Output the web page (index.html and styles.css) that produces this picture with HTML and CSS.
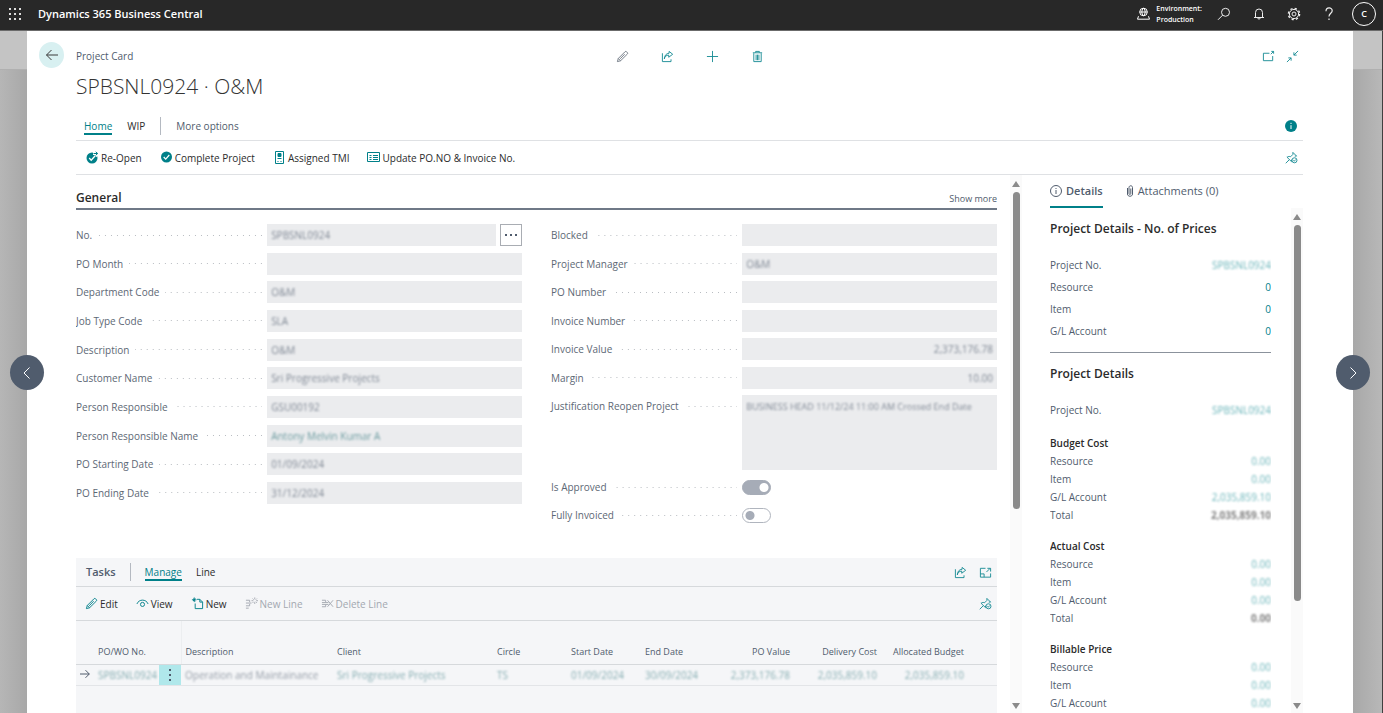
FILE: index.html
```html
<!DOCTYPE html>
<html lang="en">
<head>
<meta charset="utf-8">
<title>Project Card - Dynamics 365 Business Central</title>
<link rel="stylesheet" href="styles.css">
</head>
<body>
<svg class="defs" aria-hidden="true">
  <symbol id="i-pencil" viewBox="0 0 14 14"><path d="M1.500 12.500l1-3.400L9.600 2a1.300 1.300 0 0 1 1.900 0l.6.6a1.300 1.300 0 0 1 0 1.900L4.900 11.600zM2.500 9.100l2.400 2.500M9.300 4.500L4.500 9.500"/></symbol>
  <symbol id="i-share" viewBox="0 0 14 14"><path d="M1.500 3.500v9h9.300V10M3.600 9.600c.4-2.600 2-4 4.700-4.100V7.800L12.600 4.600 8.700 1.500v2C5.500 3.700 3.700 6 3.600 9.600z"/></symbol>
  <symbol id="i-plus" viewBox="0 0 14 14"><path d="M7 1v12M1 7h12"/></symbol>
  <symbol id="i-trash" viewBox="0 0 14 14"><path d="M2 3h10M5 2.800V1.500h4v1.300M3 3.500v9h8v-9M5.500 5v6M7 5v6M8.500 5v6"/></symbol>
  <symbol id="i-popout" viewBox="0 0 14 14"><path d="M8 3.500H1.500v8h10V6.500M9.500 4.500l3-3M10 1.500h2.500V4"/></symbol>
  <symbol id="i-shrink" viewBox="0 0 14 14"><path d="M13 1L8.500 5.500M8.500 2.500v3h3M1 13l4.500-4.500M2.500 8.500h3v3"/></symbol>
  <symbol id="i-pin" viewBox="0 0 14 14"><path d="M.8 13.200l3.700-3.700M2 6.500l5 5M2.300 6.700c1.300-1 2.700-1 3.700-.5l2.500-2.500V1.500l4 4h-2M7 11.300v-2"/><circle cx="10.200" cy="10" r="2.700"/><path d="M9 10l1 1 1.500-1.800"/></symbol>
  <symbol id="i-expand" viewBox="0 0 14 14"><path d="M7 2.500H1.500v9.500h11V8M1.500 8.500h4V12M8 6.500l4-4M9 2.500h3.500V6"/></symbol>
</svg>

<header class="topbar">
  <button class="icon-btn" aria-label="App launcher"><svg width="12" height="12" viewBox="0 0 12 12" fill="#ddd"><path d="M0 0h2v2H0zM5 0h2v2H5zM10 0h2v2h-2zM0 5h2v2H0zM5 5h2v2H5zM10 5h2v2h-2zM0 10h2v2H0zM5 10h2v2H5zM10 10h2v2h-2z"/></svg></button>
  <span class="brand">Dynamics 365 Business Central</span>
  <div class="env">
    <svg width="13" height="13" viewBox="0 0 13 13" class="line"><circle cx="6.500" cy="5" r="3.800"/><path d="M2.700 5h7.600M6.500 1.200c-2.200 2-2.200 5.500 0 7.600M6.500 1.200c2.200 2 2.200 5.500 0 7.600M1.500 9.200l-1 3h12l-1-3"/></svg>
    <span>Environment:<br>Production</span>
  </div>
  <nav class="top-actions">
    <button class="icon-btn" aria-label="Search"><svg width="14" height="14" viewBox="0 0 14 14" class="line"><circle cx="8.500" cy="5.300" r="4"/><path d="M5.600 8.200L1 12.800"/></svg></button>
    <button class="icon-btn" aria-label="Notifications"><svg width="14" height="14" viewBox="0 0 14 14" class="line"><path d="M2 10.500h10M3.500 10.500V5.500a3.500 3.500 0 0 1 7 0v5M5.800 11c.3 1.600 2.100 1.600 2.400 0"/></svg></button>
    <button class="icon-btn" aria-label="Settings"><svg width="14" height="14" viewBox="0 0 14 14" class="line"><circle cx="7" cy="7" r="4.600"/><circle cx="7" cy="7" r="2"/><circle cx="7" cy="7" r="5.600" stroke-dasharray="2.200 2.200" stroke-width="1.400"/></svg></button>
    <button class="icon-btn" aria-label="Help"><svg width="14" height="14" viewBox="0 0 14 14" class="line"><path d="M4 4.200c0-4.300 6.200-4.200 6.200-.5C10.200 6.300 7 6.300 7 9.500M7 11.500v1.500" stroke-width="1.200"/></svg></button>
    <button class="avatar" aria-label="Account">C</button>
  </nav>
</header>

<div class="stage">
  <button class="pager pager-prev" aria-label="Previous record"><svg width="14" height="14" viewBox="0 0 14 14" class="line"><path d="M9.500 1.500L4 7l5.500 5.500"/></svg></button>
  <button class="pager pager-next" aria-label="Next record"><svg width="14" height="14" viewBox="0 0 14 14" class="line"><path d="M4.500 1.500L10 7l-5.500 5.500"/></svg></button>

  <main class="page">
    <button class="back" aria-label="Back"><svg width="14" height="14" viewBox="0 0 14 14" class="line"><path d="M13 7H1.500M6.500 2l-5 5 5 5"/></svg></button>
    <div class="content">
      <div class="page-head">
        <span class="caption">Project Card</span>
        <div class="head-actions">
          <button class="icon-btn muted" aria-label="Edit"><svg class="ico"><use href="#i-pencil"/></svg></button>
          <button class="icon-btn" aria-label="Share"><svg class="ico"><use href="#i-share"/></svg></button>
          <button class="icon-btn" aria-label="New"><svg class="ico"><use href="#i-plus"/></svg></button>
          <button class="icon-btn" aria-label="Delete"><svg class="ico"><use href="#i-trash"/></svg></button>
        </div>
        <div class="head-window">
          <button class="icon-btn" aria-label="Open in new window"><svg class="ico"><use href="#i-popout"/></svg></button>
          <button class="icon-btn" aria-label="Collapse"><svg class="ico"><use href="#i-shrink"/></svg></button>
        </div>
      </div>
      <h1>SPBSNL0924 · O&amp;M</h1>

      <div class="bar tabs">
        <button class="tab active">Home</button>
        <button class="tab">WIP</button>
        <span class="divider"></span>
        <button class="tab soft">More options</button>
        <button class="icon-btn push" aria-label="Information"><svg width="12" height="12" viewBox="0 0 12 12"><circle cx="6" cy="6" r="6" fill="#008089"/><path d="M6 5.200v3.800M6 2.800v1.200" stroke="#fff"/></svg></button>
      </div>
      <div class="bar toolbar">
        <button class="action"><svg width="13" height="13" viewBox="0 0 13 13"><circle cx="6" cy="7" r="5.500" fill="#008089"/><path d="M3.200 7l2 2.200 4-4.500" stroke="#fff" stroke-width="1.300" fill="none"/><path d="M7 2.500h4.500M9.500.3l2.500 2.200-2.500 2.300" stroke="#fff" stroke-width="3" fill="none"/><path d="M7.500 2.500h4M9.700.8l2 1.700-2 1.800" stroke="#008089" fill="none"/></svg>Re-Open</button>
        <button class="action"><svg width="13" height="13" viewBox="0 0 13 13"><circle cx="6.500" cy="6" r="5.500" fill="#008089"/><path d="M3.700 6l2 2.200 3.600-4.200" stroke="#fff" stroke-width="1.200" fill="none"/></svg>Complete Project</button>
        <button class="action"><svg width="13" height="13" viewBox="0 0 13 13" class="line teal"><path d="M2.500.5h8v12h-8zM4.500 7.500h4M4.500 10.500h1M7.500 10.500h1"/><path d="M5 2.500h3v3H5z" fill="#008089"/></svg>Assigned TMI</button>
        <button class="action"><svg width="13" height="13" viewBox="0 0 13 13" class="line teal"><path d="M.5 1.500h12v9H.5zM2.500 4.500h2M2.500 6.500h2M2.500 8.500h2M6 4.500h5M6 6.500h5M6 8.500h5"/></svg>Update PO.NO &amp; Invoice No.</button>
        <button class="icon-btn push" aria-label="Pin actions"><svg class="ico"><use href="#i-pin"/></svg></button>
      </div>

      <div class="body">
        <div class="card">
          <section>
            <div class="group-head"><h2>General</h2><button class="link-btn">Show more</button></div>
            <div class="fields">
              <div class="stack stack-ten">
                <div class="field"><label for="no">No.</label><div class="with-more"><div class="box"><input id="no" readonly value="SPBSNL0924"></div><button class="more" aria-label="Look up number"><svg width="12" height="4" viewBox="0 0 12 4" fill="#505c6d"><path d="M0 1h2v2H0zM5 1h2v2H5zM10 1h2v2h-2z"/></svg></button></div></div>
                <div class="field"><label for="month">PO Month</label><div class="box"><input id="month" readonly></div></div>
                <div class="field"><label for="dept">Department Code</label><div class="box"><input id="dept" readonly value="O&amp;M"></div></div>
                <div class="field"><label for="job">Job Type Code</label><div class="box"><input id="job" readonly value="SLA"></div></div>
                <div class="field"><label for="desc">Description</label><div class="box"><input id="desc" readonly value="O&amp;M"></div></div>
                <div class="field"><label for="cust">Customer Name</label><div class="box"><input id="cust" readonly value="Sri Progressive Projects"></div></div>
                <div class="field"><label for="resp">Person Responsible</label><div class="box"><input id="resp" readonly value="GSU00192"></div></div>
                <div class="field"><label for="respname">Person Responsible Name</label><div class="box"><input id="respname" class="teal-text" readonly value="Antony Melvin Kumar A"></div></div>
                <div class="field"><label for="start">PO Starting Date</label><div class="box"><input id="start" readonly value="01/09/2024"></div></div>
                <div class="field"><label for="end">PO Ending Date</label><div class="box"><input id="end" readonly value="31/12/2024"></div></div>
              </div>
              <div class="side-stack">
                <div class="stack stack-six">
                  <div class="field"><label for="blocked">Blocked</label><div class="box"><input id="blocked" readonly></div></div>
                  <div class="field"><label for="pm">Project Manager</label><div class="box"><input id="pm" readonly value="O&amp;M"></div></div>
                  <div class="field"><label for="pon">PO Number</label><div class="box"><input id="pon" readonly></div></div>
                  <div class="field"><label for="inv">Invoice Number</label><div class="box"><input id="inv" readonly></div></div>
                  <div class="field"><label for="val">Invoice Value</label><div class="box"><input id="val" class="num" readonly value="2,373,176.78"></div></div>
                  <div class="field"><label for="margin">Margin</label><div class="box"><input id="margin" class="num" readonly value="10.00"></div></div>
                </div>
                <div class="field"><label for="just">Justification Reopen Project</label><div class="box"><textarea id="just" readonly>BUSINESS HEAD 11/12/24 11:00 AM Crossed End Date</textarea></div></div>
                <div class="field switch-row"><label for="appr">Is Approved</label><input id="appr" class="switch" type="checkbox" checked></div>
                <div class="field switch-row"><label for="full">Fully Invoiced</label><input id="full" class="switch" type="checkbox"></div>
              </div>
            </div>
          </section>

          <section class="tasks">
            <div class="bar task-tabs">
              <h2>Tasks</h2><span class="divider"></span>
              <button class="tab active">Manage</button>
              <button class="tab">Line</button>
              <button class="icon-btn push" aria-label="Share tasks"><svg class="ico"><use href="#i-share"/></svg></button>
              <button class="icon-btn" aria-label="Expand tasks"><svg class="ico"><use href="#i-expand"/></svg></button>
            </div>
            <div class="bar toolbar task-tools">
              <button class="action"><svg class="ico"><use href="#i-pencil"/></svg>Edit</button>
              <button class="action"><svg class="ico" viewBox="0 0 14 14"><path d="M1 7.500c2-5.500 10-5.500 12 0"/><circle cx="7" cy="8" r="2.200"/></svg>View</button>
              <button class="action"><svg class="ico" viewBox="0 0 14 14"><path d="M6.500 2.500H9.500l3 3v7H4.500V7M9.500 2.500v3h3M3.500.5v5M1 3h5M2.200 1.700l2.600 2.600M4.800 1.700L2.200 4.300"/></svg>New</button>
              <button class="action" disabled><svg class="ico" viewBox="0 0 14 14"><path d="M1 3.500h4v2M1 6.500h6M1 9.500h4v-2M1 12h3M10.500.5v2M10.500 5.500v2M7 4h2M12 4h2M8.200 1.700l1.200 1.200M11.600 5.100l1.200 1.200M12.800 1.700l-1.200 1.200M9.400 5.100L8.200 6.300"/></svg>New Line</button>
              <button class="action" disabled><svg class="ico" viewBox="0 0 14 14"><path d="M1 3.500h4v2M1 6h7M1 8h7M1 10.500h4v-2M7 3.500l6 7M13 3.500l-6 7"/></svg>Delete Line</button>
              <button class="icon-btn push" aria-label="Pin task actions"><svg class="ico"><use href="#i-pin"/></svg></button>
            </div>
            <table>
              <colgroup><col class="c-mark"><col class="c-no"><col class="c-menu"><col class="c-desc"><col class="c-client"><col class="c-date"><col class="c-date"><col class="c-date"><col class="c-val"><col class="c-cost"><col class="c-cost"><col></colgroup>
              <thead><tr><th></th><th class="flush">PO/WO No.</th><th class="edge"></th><th>Description</th><th>Client</th><th>Circle</th><th>Start Date</th><th>End Date</th><th class="num">PO Value</th><th class="num">Delivery Cost</th><th class="num">Allocated Budget</th><th></th></tr></thead>
              <tbody><tr>
                <td class="mark"><svg width="10" height="10" viewBox="0 0 10 10" class="line"><path d="M0 5h9.300M5.500 1.200L9.300 5 5.500 8.800"/></svg></td>
                <td class="flush teal-text"><span class="veil">SPBSNL0924</span></td>
                <td class="menu"><button class="icon-btn" aria-label="Row menu"><svg width="4" height="12" viewBox="0 0 4 12" fill="#505c6d"><path d="M1 0h2v2H1zM1 5h2v2H1zM1 10h2v2H1z"/></svg></button></td>
                <td><span class="veil">Operation and Maintainance</span></td>
                <td class="teal-text"><span class="veil">Sri Progressive Projects</span></td>
                <td class="teal-text"><span class="veil">TS</span></td>
                <td class="teal-text"><span class="veil">01/09/2024</span></td>
                <td class="teal-text"><span class="veil">30/09/2024</span></td>
                <td class="num teal-text"><span class="veil">2,373,176.78</span></td>
                <td class="num teal-text"><span class="veil">2,035,859.10</span></td>
                <td class="num teal-text"><span class="veil">2,035,859.10</span></td>
                <td></td>
              </tr></tbody>
            </table>
          </section>
        </div>

        <div class="scroll" aria-hidden="true"><span class="up"></span><span class="thumb thumb-main"></span><span class="down"></span></div>

        <aside class="facts">
          <div class="fact-tabs">
            <button class="fact-tab active"><svg width="12" height="12" viewBox="0 0 12 12" class="line"><circle cx="6" cy="6" r="5.500"/><path d="M6 5v4M6 3v1"/></svg>Details</button>
            <button class="fact-tab"><svg width="8" height="12" viewBox="0 0 8 12" class="line"><path d="M1.500 3v6c0 3 5 3 5 0V2.500c0-2.300-3.500-2.300-3.500 0V8.500c0 1.200 1.800 1.200 1.800 0V3.500"/></svg>Attachments (0)</button>
          </div>
          <div class="fact-body">
            <div class="fact-list">
              <h3>Project Details - No. of Prices</h3>
              <dl class="roomy">
                <div><dt>Project No.</dt><dd><span class="veil">SPBSNL0924</span></dd></div>
                <div><dt>Resource</dt><dd>0</dd></div>
                <div><dt>Item</dt><dd>0</dd></div>
                <div><dt>G/L Account</dt><dd>0</dd></div>
              </dl>
              <h3 class="ruled">Project Details</h3>
              <dl class="roomy">
                <div><dt>Project No.</dt><dd><span class="veil">SPBSNL0924</span></dd></div>
              </dl>
              <h4>Budget Cost</h4>
              <dl>
                <div><dt>Resource</dt><dd><span class="veil">0.00</span></dd></div>
                <div><dt>Item</dt><dd><span class="veil">0.00</span></dd></div>
                <div><dt>G/L Account</dt><dd><span class="veil">2,035,859.10</span></dd></div>
                <div><dt>Total</dt><dd class="total"><span class="veil">2,035,859.10</span></dd></div>
              </dl>
              <h4>Actual Cost</h4>
              <dl>
                <div><dt>Resource</dt><dd><span class="veil">0.00</span></dd></div>
                <div><dt>Item</dt><dd><span class="veil">0.00</span></dd></div>
                <div><dt>G/L Account</dt><dd><span class="veil">0.00</span></dd></div>
                <div><dt>Total</dt><dd class="total"><span class="veil">0.00</span></dd></div>
              </dl>
              <h4>Billable Price</h4>
              <dl>
                <div><dt>Resource</dt><dd><span class="veil">0.00</span></dd></div>
                <div><dt>Item</dt><dd><span class="veil">0.00</span></dd></div>
                <div><dt>G/L Account</dt><dd><span class="veil">0.00</span></dd></div>
              </dl>
            </div>
            <div class="scroll" aria-hidden="true"><span class="up"></span><span class="thumb thumb-facts"></span><span class="down"></span></div>
          </div>
        </aside>
      </div>
    </div>
  </main>
</div>
</body>
</html>
```

FILE: styles.css
```css
:root {
  --teal: #008089;
  --slate: #505c6d;
  --ink: #2b2b2b;
  --line: #dfe1e4;
}

* { box-sizing: border-box; }

body {
  margin: 0;
  height: 100vh;
  display: flex;
  flex-direction: column;
  overflow: hidden;
  font: 10px/16px "Open Sans", "Noto Sans", sans-serif;
  color: var(--slate);
}

button, input, textarea { font: inherit; color: inherit; }
button { border: 0; padding: 0; background: none; cursor: pointer; white-space: nowrap; }
h1, h2, h3, h4, dl, dd { margin: 0; }

.defs { display: none; }
.line { fill: none; stroke: currentColor; }
.teal { color: var(--teal); }
.ico { display: block; flex: none; width: 13px; height: 13px; fill: none; stroke: currentColor; }
.icon-btn { display: flex; align-items: center; justify-content: center; color: #1a8d95; }
.push { margin-left: auto; }
.veil { filter: blur(1px); opacity: .6; display: inline-block; }
.teal-text { color: #35787e; }

/* Top bar */
.topbar {
  display: flex;
  align-items: center;
  height: 31px;
  padding: 0 7px 3px 9px;
  background: #282828;
  color: #fff;
  border-bottom: 1px solid #6b6b6b;
}
.topbar .icon-btn { color: #eee; }
.brand { margin-left: 17px; font-size: 11px; font-weight: 600; }
.env { display: flex; align-items: center; gap: 6px; margin-left: auto; font-size: 7px; line-height: 11px; font-weight: 600; }
.top-actions { display: flex; align-items: center; gap: 21px; margin-left: 15px; }
.avatar { width: 24px; height: 24px; margin-left: -5px; border: 1px solid #fff; border-radius: 50%; font-size: 9px; line-height: 20px; font-weight: 600; }

/* Backdrop */
.stage {
  position: relative;
  flex: 1;
  min-height: 0;
  display: flex;
  padding: 0 29px 0 27px;
  border-right: 1px solid #404040;
  background:
    linear-gradient(#c4c4c4 0 38px, #b0b0b0 38px 39px, transparent 39px),
    linear-gradient(90deg, #b6b6b6 0, #a8a8a8 27px, #a8a8a8 calc(100% - 29px), #b8b8b8 100%);
}
.pager {
  position: absolute;
  top: 324px;
  display: flex;
  align-items: center;
  justify-content: center;
  width: 34px;
  height: 35px;
  border-radius: 50%;
  background: var(--slate);
  color: #fff;
}
.pager-prev { left: 10px; }
.pager-next { right: 12px; }

/* Page */
.page {
  flex: 1;
  min-width: 0;
  display: grid;
  grid-template-columns: 37px minmax(0, 1fr);
  grid-template-rows: minmax(0, 1fr);
  padding: 11px 50px 0 12px;
  background: #fff;
}
.back {
  display: flex;
  align-items: center;
  justify-content: center;
  width: 25px;
  height: 26px;
  border-radius: 50%;
  background: #d8f0f1;
  color: #3b3b3b;
}
.content { display: flex; flex-direction: column; min-height: 0; }
.page-head { display: grid; grid-template-columns: 1fr auto 1fr; align-items: center; height: 28px; }
.head-actions { display: flex; gap: 32px; }
.head-window { display: flex; gap: 11px; justify-content: flex-end; padding-right: 4px; }
.page-head .muted { color: #6e7783; }
h1 { margin-top: 1px; font-size: 21px; line-height: 30px; font-weight: 300; color: #333; }

.bar { display: flex; align-items: center; flex: none; border-bottom: 1px solid var(--line); }
.tabs { height: 29px; margin-top: 11px; padding: 0 6px 0 8px; gap: 15px; }
.tab { height: 18px; padding-top: 2px; color: var(--ink); border-bottom: 2px solid transparent; line-height: 14px; }
.tab.active { color: var(--teal); border-color: var(--teal); }
.tab.soft { color: var(--slate); }
.divider { width: 1px; height: 18px; background: #b4b9c1; }
.toolbar { height: 34px; padding: 0 5px 0 10px; gap: 18px; }
.task-tools { padding-left: 9px; }
.action { display: flex; align-items: center; gap: 2px; color: var(--ink); }
.action .ico { color: var(--teal); }
.action:disabled, .action:disabled .ico { color: #a3a8b0; }

.body { display: flex; flex: 1; min-height: 0; }
.card { flex: 1; min-width: 0; display: flex; flex-direction: column; overflow: hidden; }

.group-head {
  display: flex;
  align-items: center;
  justify-content: space-between;
  height: 35px;
  padding-top: 12px;
  border-bottom: 2px solid #6f7987;
}
h2 { font-size: 12px; font-weight: 600; color: var(--ink); }
.link-btn { padding-top: 2px; font-size: 9px; }

.fields { display: grid; grid-template-columns: 1fr 1fr; gap: 29px; padding-top: 14px; }
.stack { display: flex; flex-direction: column; justify-content: space-between; }
.stack-ten { min-height: 280px; align-self: start; }
.stack-six { min-height: 165px; }
.side-stack { display: flex; flex-direction: column; gap: 6px; }
.field { display: grid; grid-template-columns: minmax(0, 3fr) minmax(0, 4fr); }
.field label { display: flex; align-items: center; gap: 6px; height: 22px; padding-right: 5px; white-space: nowrap; color: #5d6875; }
.field label::after {
  content: "";
  flex: 1;
  height: 1px;
  background: linear-gradient(90deg, transparent 5px, #b9bdc2 5px) right / 6px 1px repeat-x;
}
.box { flex: 1; min-width: 0; background: #ebecee; }
.box input, .box textarea {
  display: block;
  width: 100%;
  height: 22px;
  padding: 0 4px;
  border: 0;
  background: none;
  outline: 0;
  filter: blur(1px);
  opacity: .7;
}
.box textarea { height: 75px; padding: 4px; resize: none; overflow: hidden; white-space: nowrap; font-size: 9px; }
.num { text-align: right; }
.with-more { display: flex; gap: 4px; }
.more { display: flex; align-items: center; justify-content: center; width: 22px; height: 22px; border: 1px solid #a9adb3; background: #fff; }

.switch-row { align-items: center; }
.switch {
  appearance: none;
  width: 29px;
  height: 15px;
  margin: 0;
  border: 1px solid #b0b5be;
  border-radius: 8px;
  background: radial-gradient(circle at 7px 50%, #a6acb7 4px, transparent 5px) #fff;
}
.switch:checked { border-color: #a6acb7; background: radial-gradient(circle at 21px 50%, #fff 4px, transparent 5px) #a6acb7; }

/* Tasks */
.tasks { flex: 1; margin-top: 32px; background: #f5f6f8; }
.tasks .bar { border-color: #d6d9dc; }
.task-tabs { height: 29px; padding: 0 5px 0 10px; gap: 14px; }
.task-tabs h2 { font-size: 11px; color: var(--slate); }
.task-tabs .push + .icon-btn { margin-left: -2px; }

table { width: 100%; table-layout: fixed; border-collapse: collapse; }
th, td { padding: 0 4px; text-align: left; white-space: nowrap; }
th { height: 43px; padding-bottom: 4px; vertical-align: bottom; font-size: 9px; font-weight: 400; border-bottom: 1px solid #d6d9dc; }
td { height: 21px; border-bottom: 1px solid #e3e5e8; }
th.num, td.num { text-align: right; }
.flush { padding-left: 0; padding-right: 0; }
th.edge { border-right: 1px solid #eceef0; }
td.mark { color: var(--slate); line-height: 10px; }
td.menu { padding: 0; background: #b0e8eb; }
td.menu .icon-btn { width: 100%; height: 20px; }
.c-mark { width: 22px; }
.c-no { width: 61px; }
.c-menu { width: 22px; }
.c-desc { width: 152px; }
.c-client { width: 160px; }
.c-date { width: 74px; }
.c-val { width: 79px; }
.c-cost { width: 87px; }

/* Scroll indicators */
.scroll { display: flex; flex-direction: column; align-items: center; flex: none; width: 12px; padding: 6px 0 4px; background: #fafafa; }
.body > .scroll { margin: 0 28px 0 13px; }
.up, .down { border: 4px solid transparent; }
.up { border-top: 0; border-bottom: 6px solid #8a8a8a; }
.down { border-bottom: 0; border-top: 6px solid #8a8a8a; margin-top: auto; }
.thumb { width: 7px; margin-top: 5px; border-radius: 4px; background: #8a8a8a; }
.thumb-main { height: 60%; }
.thumb-facts { height: 76%; }

/* Fact boxes */
.facts { flex: none; width: 253px; display: flex; flex-direction: column; min-height: 0; }
.fact-tabs { display: flex; gap: 23px; flex: none; height: 33px; }
.fact-tab { display: flex; align-items: center; gap: 4px; font-size: 11px; border-bottom: 2px solid transparent; }
.fact-tab.active { font-weight: 600; border-color: var(--teal); }
.fact-body { display: flex; flex: 1; min-height: 0; }
.fact-list { flex: 1; min-width: 0; margin-right: 20px; overflow: hidden; }
h3 { padding: 11px 0 15px; font-size: 12px; line-height: 20px; font-weight: 600; color: var(--ink); }
h3.ruled { margin-top: 10px; border-top: 1px solid #8b929c; padding-top: 11px; padding-bottom: 15px; }
dl div { display: flex; justify-content: space-between; line-height: 18px; }
dl.roomy div { line-height: 22px; }
dd { color: var(--teal); }
dd.total { color: var(--ink); font-weight: 700; }
h4 { margin-top: 13px; font-size: 10px; line-height: 18px; font-weight: 600; color: var(--ink); }
```
